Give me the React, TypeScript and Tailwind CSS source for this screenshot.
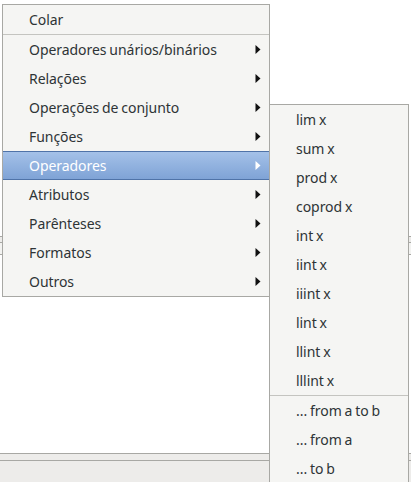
import React from "react";

const font = { fontFamily: '"Noto Sans", sans-serif' };

function Arrow({ white }: { white?: boolean }) {
  return (
    <svg width="6" height="9" viewBox="0 0 6 9" className="shrink-0">
      <path d="M0.5 0 L5.5 4.5 L0.5 9 Z" fill={white ? "#ffffff" : "#111111"} />
    </svg>
  );
}

function Item({ label, arrow, active }: { label: string; arrow?: boolean; active?: boolean }) {
  return (
    <div
      className={
        "flex h-[29px] items-center justify-between pl-[26px] pr-[8px] text-[14px] tracking-[-0.05px] [word-spacing:-0.7px] " +
        (active
          ? "text-white bg-gradient-to-b from-[#a4c1e8] to-[#7fa3d6] border-y border-[#4f73a8]"
          : "text-[#2e3436]")
      }
    >
      <span>{label}</span>
      {arrow && <Arrow white={active} />}
    </div>
  );
}

const Sep = () => <div className="h-px bg-[#c4c4c0]" />;

export default function App() {
  const main = ["Operadores unários/binários", "Relações", "Operações de conjunto", "Funções", "Operadores", "Atributos", "Parênteses", "Formatos", "Outros"];
  const sub = ["lim x", "sum x", "prod x", "coprod x", "int x", "iint x", "iiint x", "lint x", "llint x", "lllint x"];
  return (
    <div className="relative flex h-[482px] w-[411px] flex-col overflow-hidden bg-white" style={font}>
      <div className="h-[236px] shrink-0" />
      <div className="h-[7px] shrink-0 border-y border-[#a8a8a4] bg-[#edecea]" />
      <div className="h-[11px] shrink-0 bg-[#f3f3f1]" />
      <div className="h-px shrink-0 bg-[#a8a8a4]" />
      <div className="flex-1" />
      <div className="h-[8px] shrink-0 border-y border-[#a8a8a4] bg-[#edecea]" />
      <div className="h-[21px] shrink-0 bg-[#edecea]" />
      <div className="absolute left-[2px] top-[4px] w-[268px] border border-[#a8a8a4] bg-[#f5f5f3]">
        <Item label="Colar" />
        <Sep />
        {main.map((m) => (
          <Item key={m} label={m} arrow active={m === "Operadores"} />
        ))}
      </div>
      <div className="absolute left-[269px] top-[104px] h-[400px] w-[140px] border border-[#a8a8a4] bg-[#f5f5f3]">
        {sub.map((m) => (
          <Item key={m} label={m} />
        ))}
        <Sep />
        <Item label="... from a to b" />
        <Item label="... from a" />
        <Item label="... to b" />
      </div>
    </div>
  );
}
